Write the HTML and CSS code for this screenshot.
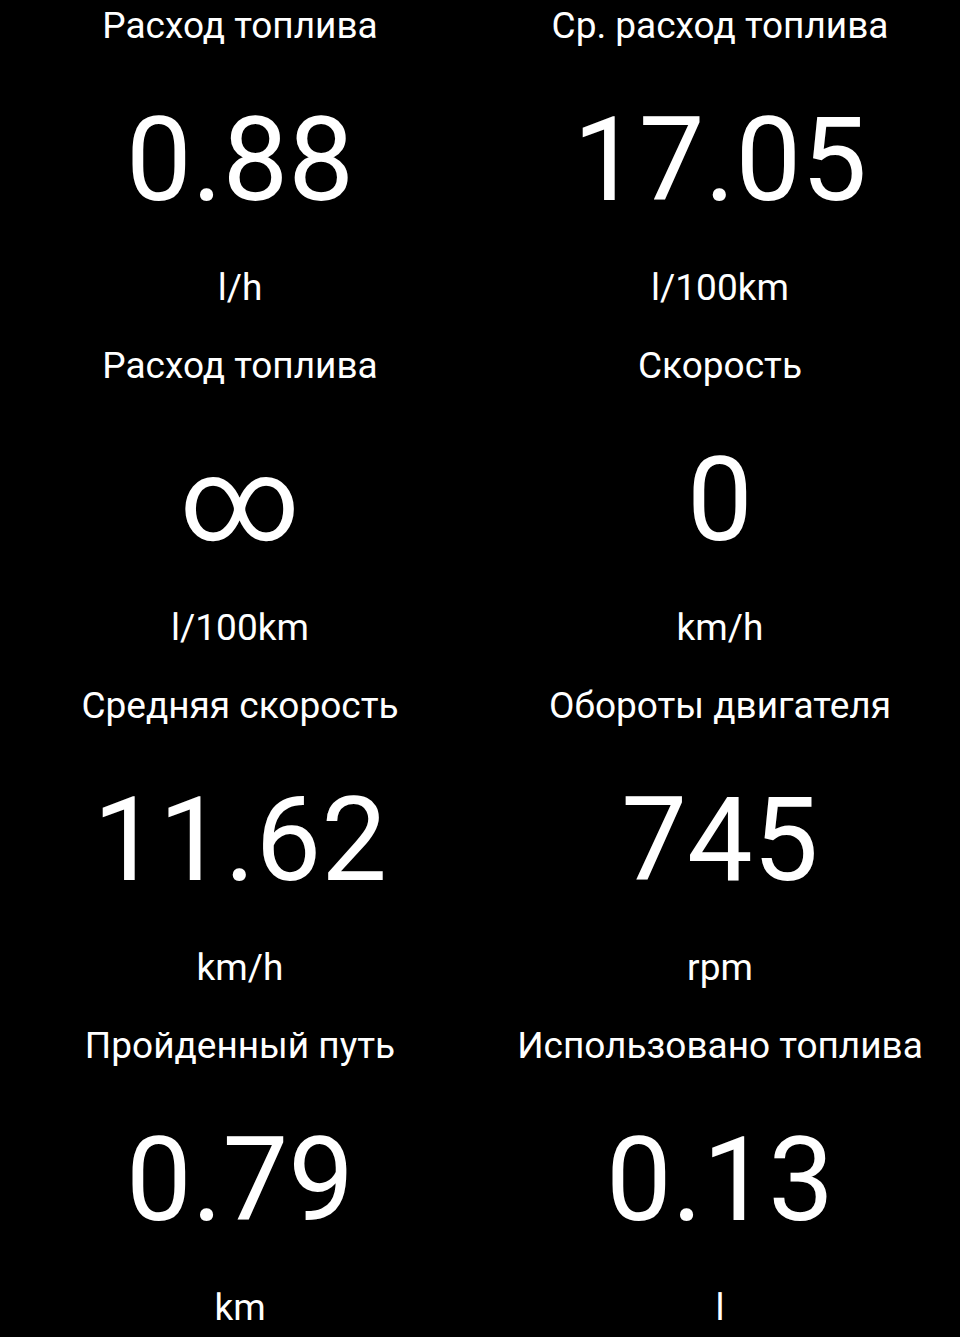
FILE: index.html
```html
<!DOCTYPE html>
<html>
<head>
    <title>Trip computer</title>
    <link rel="stylesheet" href="styles.css">
</head>
<body>
    <div class="gauges">
        <div class="gauge">
            <div class="gauge-title">Расход топлива</div>
            <div class="gauge-value">0.88</div>
            <div class="gauge-unit">l/h</div>
        </div>
        <div class="gauge">
            <div class="gauge-title">Ср. расход топлива</div>
            <div class="gauge-value">17.05</div>
            <div class="gauge-unit">l/100km</div>
        </div>
        <div class="gauge">
            <div class="gauge-title">Расход топлива</div>
            <div class="gauge-value">∞</div>
            <div class="gauge-unit">l/100km</div>
        </div>
        <div class="gauge">
            <div class="gauge-title">Скорость</div>
            <div class="gauge-value">0</div>
            <div class="gauge-unit">km/h</div>
        </div>
        <div class="gauge">
            <div class="gauge-title">Средняя скорость</div>
            <div class="gauge-value">11.62</div>
            <div class="gauge-unit">km/h</div>
        </div>
        <div class="gauge">
            <div class="gauge-title">Обороты двигателя</div>
            <div class="gauge-value">745</div>
            <div class="gauge-unit">rpm</div>
        </div>
        <div class="gauge">
            <div class="gauge-title">Пройденный путь</div>
            <div class="gauge-value">0.79</div>
            <div class="gauge-unit">km</div>
        </div>
        <div class="gauge">
            <div class="gauge-title">Использовано топлива</div>
            <div class="gauge-value">0.13</div>
            <div class="gauge-unit">l</div>
        </div>
    </div>
</body>
</html>
```

FILE: styles.css
```css
body {
    margin: 0;
    padding: 0;
    background: #000;
    color: #fff;
    font-family: Roboto, 'Noto Sans', sans-serif;
}
.gauges {
    display: grid;
    grid-template-columns: 1fr 1fr;
    grid-auto-rows: 340px;
    width: 960px;
}
.gauge {
    display: flex;
    flex-direction: column;
    align-items: center;
    text-align: center;
}
.gauge-title {
    font-size: 37px;
    line-height: 52px;
    white-space: nowrap;
}
.gauge-value {
    margin-top: 38px;
    font-size: 117px;
    line-height: 140px;
}
.gauge-unit {
    margin-top: 32px;
    font-size: 37px;
    line-height: 52px;
}
```
